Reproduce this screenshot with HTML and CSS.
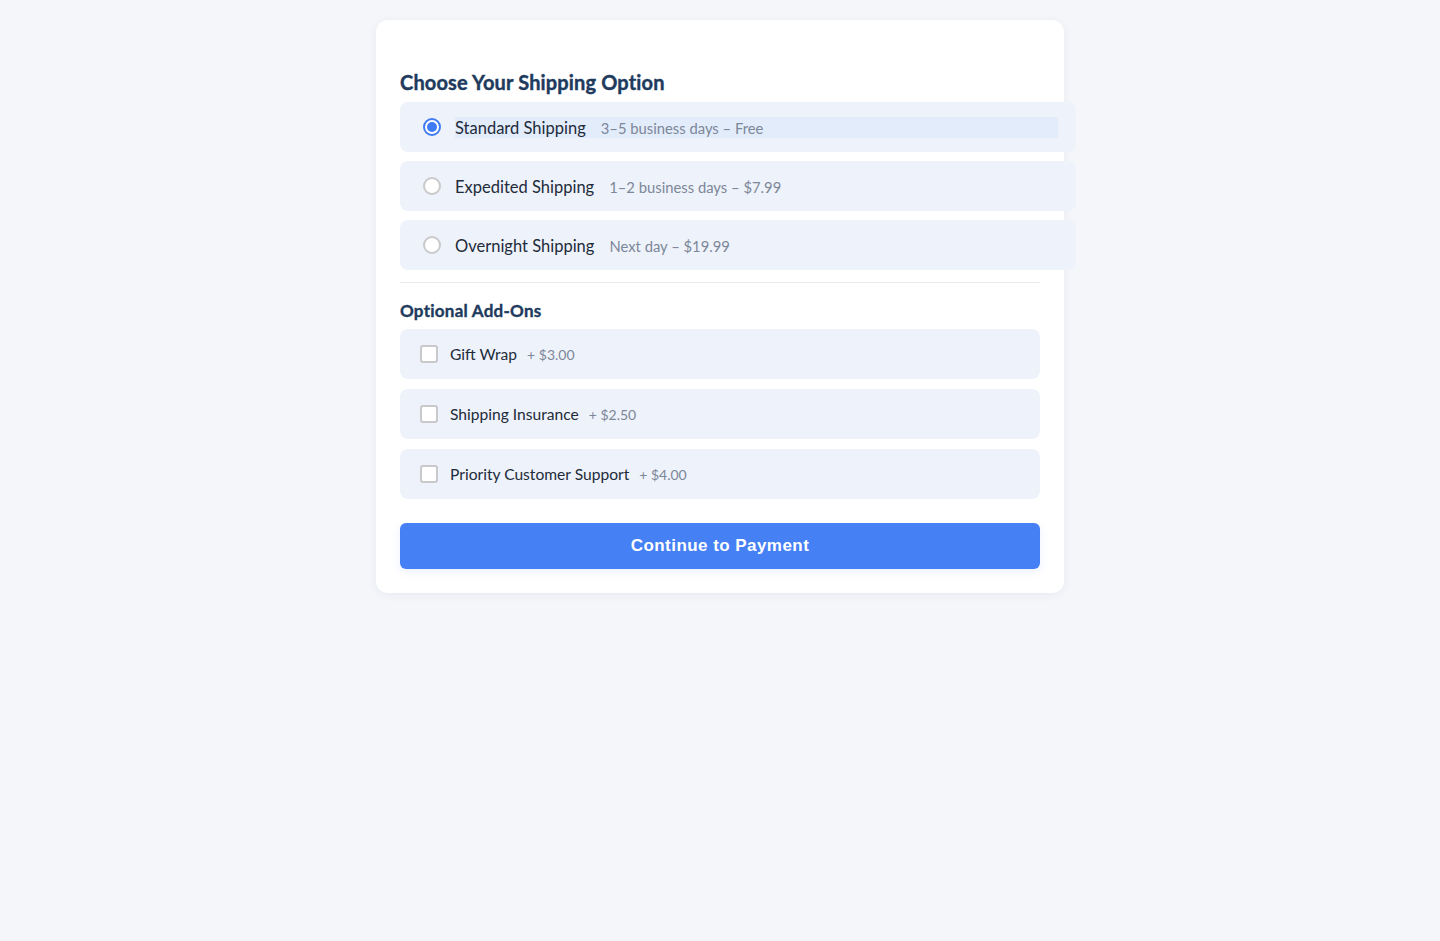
FILE: index.html
```html
<!DOCTYPE html>
<html lang="en">
<head>
<meta charset="utf-8">
<title>Shipping Options</title>
<link rel="stylesheet" href="styles.css">
</head>
<body>
<main class="card">
  <h2 class="title">Choose Your Shipping Option</h2>
  <div class="options">
    <label class="option selected">
      <span class="radio checked"></span>
      <span class="opt-label"><span class="name">Standard Shipping</span><span class="desc">3–5 business days – Free</span></span>
    </label>
    <label class="option">
      <span class="radio"></span>
      <span class="opt-label"><span class="name">Expedited Shipping</span><span class="desc">1–2 business days – $7.99</span></span>
    </label>
    <label class="option">
      <span class="radio"></span>
      <span class="opt-label"><span class="name">Overnight Shipping</span><span class="desc">Next day – $19.99</span></span>
    </label>
  </div>
  <hr class="divider">
  <h3 class="subtitle">Optional Add-Ons</h3>
  <div class="addons">
    <label class="addon"><span class="check"></span><span class="name">Gift Wrap</span><span class="price">+ $3.00</span></label>
    <label class="addon"><span class="check"></span><span class="name">Shipping Insurance</span><span class="price">+ $2.50</span></label>
    <label class="addon"><span class="check"></span><span class="name">Priority Customer Support</span><span class="price">+ $4.00</span></label>
  </div>
  <button class="cta" type="button">Continue to Payment</button>
</main>
</body>
</html>
```

FILE: styles.css
```css
html, body {
  margin: 0;
  padding: 0;
}
body {
  background: #f4f6fa;
  font-family: Lato, "Noto Sans", sans-serif;
  color: #222b3a;
  min-height: 941px;
}
.card {
  box-sizing: border-box;
  width: 688px;
  margin: 20px auto 0;
  background: #ffffff;
  border-radius: 12px;
  box-shadow: 0 2px 10px rgba(30, 50, 90, 0.06);
  padding: 50px 24px 24px;
}
.title {
  margin: 0 0 8px;
  font-size: 20px;
  line-height: 24px;
  font-weight: 700;
  letter-spacing: 0.15px;
  -webkit-text-stroke: 0.4px #203a5d;
  color: #203a5d;
}
.options {
  display: flex;
  flex-direction: column;
  gap: 9px;
}
.option {
  box-sizing: content-box;
  width: 100%;
  height: 22px;
  padding: 14px 18px;
  display: flex;
  align-items: center;
  background: #eef2fa;
  border-radius: 8px;
  cursor: pointer;
}
.radio {
  box-sizing: border-box;
  flex: none;
  width: 18px;
  height: 18px;
  margin-left: 5px;
  border-radius: 50%;
  border: 2px solid #c9c9cc;
  background: #ffffff;
  position: relative;
}
.radio.checked {
  border-color: #3f7cf3;
}
.radio.checked::after {
  content: "";
  position: absolute;
  left: 2px;
  top: 2px;
  width: 10px;
  height: 10px;
  border-radius: 50%;
  background: #3f7cf3;
}
.opt-label {
  flex: 1;
  display: flex;
  align-items: baseline;
  margin-left: 14px;
  padding-top: 1px;
  height: 20px;
  line-height: 20px;
}
.option.selected .opt-label {
  background: #e2ecfb;
}
.name {
  font-size: 16.5px;
  color: #222b3a;
}
.desc {
  margin-left: 15px;
  font-size: 14.8px;
  color: #7c8799;
}
.divider {
  border: 0;
  border-top: 1px solid #e7e9ee;
  margin: 12px 0 18px;
}
.subtitle {
  margin: 0 0 8px;
  font-size: 17px;
  line-height: 20px;
  font-weight: 700;
  letter-spacing: 0.25px;
  -webkit-text-stroke: 0.35px #203a5d;
  color: #203a5d;
}
.addons {
  display: flex;
  flex-direction: column;
  gap: 10px;
}
.addon {
  box-sizing: border-box;
  height: 50px;
  padding: 0 20px;
  display: flex;
  align-items: center;
  background: #eef2fa;
  border-radius: 8px;
  cursor: pointer;
}
.check {
  box-sizing: border-box;
  flex: none;
  width: 18px;
  height: 18px;
  border: 2px solid #c9c9cc;
  border-radius: 3px;
  background: #ffffff;
  margin-right: 12px;
}
.addon .name {
  font-size: 15.6px;
  line-height: 20px;
}
.price {
  margin-left: 10px;
  font-size: 14px;
  color: #7c8799;
}
.cta {
  display: block;
  width: 100%;
  height: 46px;
  margin-top: 24px;
  border: 0;
  border-radius: 6px;
  background: #4680f5;
  color: #ffffff;
  font-family: "Liberation Sans", Arial, sans-serif;
  font-weight: 700;
  font-size: 17px;
  letter-spacing: 0.45px;
  box-shadow: 0 3px 8px rgba(70, 128, 245, 0.12);
  cursor: pointer;
}
```
